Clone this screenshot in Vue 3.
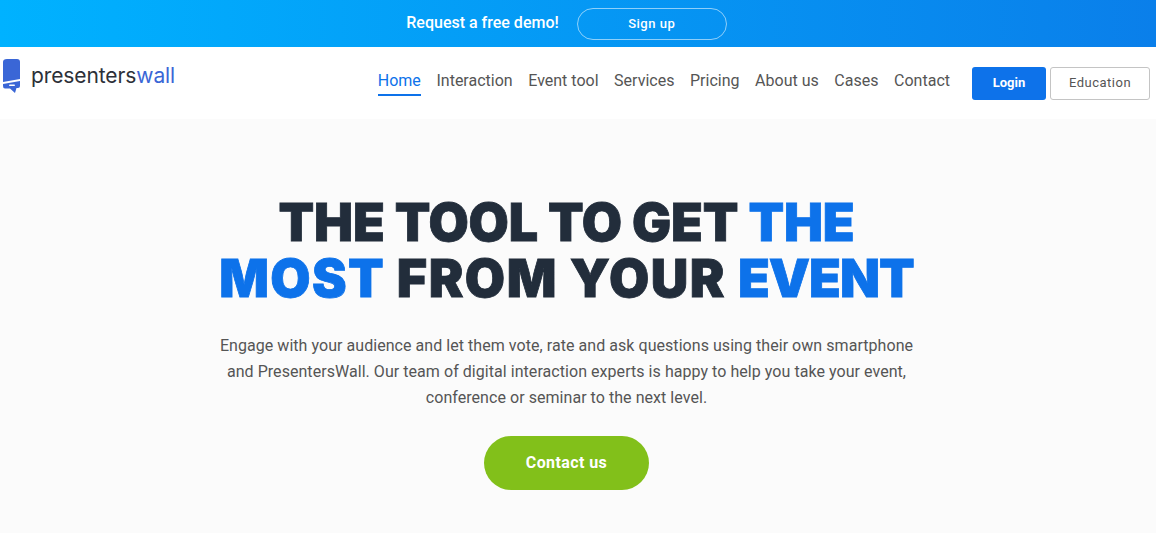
<template>
  <div class="page">
    <div class="promo">
      <span class="promo-text">Request a free demo!</span>
      <a class="signup">Sign up</a>
    </div>

    <header class="nav">
      <a class="logo">
        <svg width="20" height="36" viewBox="0 0 20 36">
          <path d="M5 0H15Q18 0 18 3V20L1 23V3Q1 0 5 0Z" fill="#3a66d6" />
          <path d="M18 22V27Q18 29 16 29H14.5L13 34L8 29.5H3Q1 29.5 1 27V25Z" fill="#3a66d6" />
          <rect x="7" y="25.5" width="6" height="1.6" rx="0.8" fill="#fff" />
        </svg>
        <span class="logo-text">presenters<span class="logo-blue">wall</span></span>
      </a>
      <nav class="links">
        <a v-for="item in links" :key="item" class="link" :class="{ active: item === 'Home' }">{{ item }}</a>
      </nav>
      <div class="actions">
        <a class="login">Login</a>
        <a class="education">Education</a>
      </div>
    </header>

    <main class="hero">
      <h1 class="title">
        <span class="line-one">THE TOOL TO GET <span class="blue">THE</span></span><br />
        <span class="line-two"><span class="blue most">MOST</span> FROM YOUR <span class="blue event">EVENT</span></span>
      </h1>
      <p class="intro">
        Engage with your audience and let them vote, rate and ask questions using their own smartphone<br />
        and PresentersWall. Our team of digital interaction experts is happy to help you take your event,<br />
        conference or seminar to the next level.
      </p>
      <a class="contact">Contact us</a>
    </main>
  </div>
</template>

<script setup>
const links = ['Home', 'Interaction', 'Event tool', 'Services', 'Pricing', 'About us', 'Cases', 'Contact']
</script>

<style>
html, body {
  margin: 0;
  background: #fbfbfb;
}
</style>

<style scoped>
.page {
  font-family: Roboto, "Noto Sans", sans-serif;
  height: 533px;
  overflow: hidden;
}

.promo {
  height: 47px;
  display: flex;
  align-items: center;
  justify-content: center;
  gap: 18px;
  padding-right: 23px;
  box-sizing: border-box;
  background: linear-gradient(90deg, #00b2ff, #0a7fea);
  color: #fff;
}

.promo-text {
  font-size: 16px;
  font-weight: 500;
  margin-top: -3px;
}

.signup {
  width: 150px;
  height: 32px;
  box-sizing: border-box;
  border: 1px solid rgba(255, 255, 255, 0.55);
  border-radius: 16px;
  display: flex;
  align-items: center;
  justify-content: center;
  font-size: 13px;
  font-weight: 500;
  letter-spacing: 0.5px;
}

.nav {
  height: 72px;
  background: #fff;
  display: flex;
  align-items: flex-start;
  padding: 12px 6px 0 2px;
  box-sizing: border-box;
}

.logo {
  display: flex;
  align-items: flex-start;
  gap: 9px;
}

.logo-text {
  font-family: Inter, sans-serif;
  font-size: 21px;
  line-height: 30px;
  letter-spacing: -0.1px;
  color: #2c3038;
  margin-top: 2px;
}

.logo-blue {
  color: #3a66d6;
}

.links {
  margin-left: auto;
  display: flex;
  gap: 15.6px;
  margin-top: 10px;
}

.link {
  font-size: 16px;
  line-height: 24px;
  color: #555;
  padding-bottom: 1px;
  border-bottom: 2px solid transparent;
}

.link.active {
  color: #0d72ea;
  border-bottom-color: #0d72ea;
}

.actions {
  display: flex;
  gap: 4px;
  margin-left: 22px;
  margin-top: 8px;
}

.login,
.education {
  height: 33px;
  box-sizing: border-box;
  border-radius: 3px;
  display: flex;
  align-items: center;
  justify-content: center;
  font-size: 13px;
  padding-bottom: 2px;
}

.login {
  width: 74px;
  background: #0d72ea;
  color: #fff;
  font-weight: 700;
}

.education {
  width: 100px;
  border: 1px solid #c4c4c4;
  color: #555;
  letter-spacing: 0.5px;
}

.hero {
  display: flex;
  flex-direction: column;
  align-items: center;
  padding-top: 76px;
  padding-right: 23px;
}

.title {
  margin: 0;
  font-family: Inter, sans-serif;
  font-weight: 900;
  font-size: 52px;
  line-height: 56px;
  color: #222d3b;
  text-align: center;
  -webkit-text-stroke: 0.8px currentColor;
}

.line-one {
  letter-spacing: -0.2px;
}

.line-two {
  letter-spacing: 1.5px;
}

.most {
  letter-spacing: 1.3px;
}

.event {
  letter-spacing: -1px;
}

.blue {
  color: #0d72ea;
}

.intro {
  margin: 26px 0 0;
  font-size: 16px;
  line-height: 26px;
  letter-spacing: 0.05px;
  color: #555;
  text-align: center;
}

.contact {
  margin-top: 25px;
  width: 165px;
  height: 54px;
  box-sizing: border-box;
  padding-bottom: 2px;
  border-radius: 27px;
  background: #82c01a;
  color: #fff;
  font-size: 16px;
  font-weight: 700;
  letter-spacing: 0.4px;
  display: flex;
  align-items: center;
  justify-content: center;
}
</style>
